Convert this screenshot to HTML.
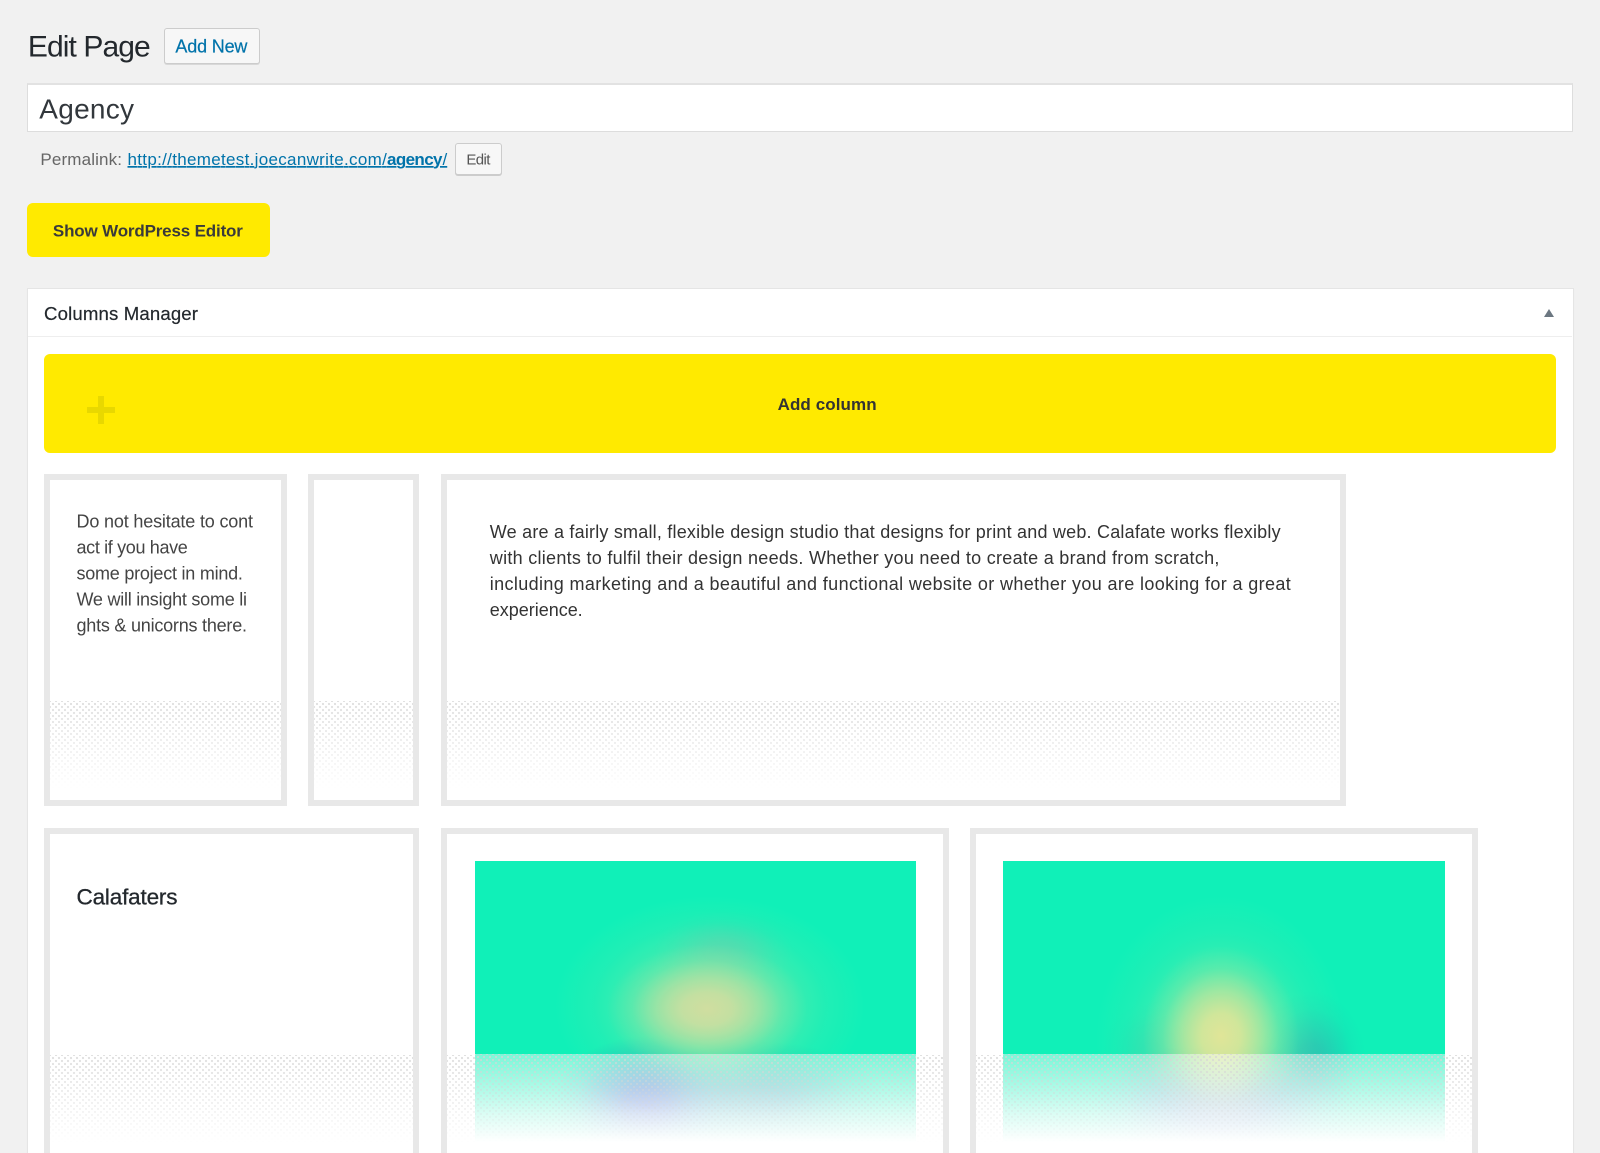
<!DOCTYPE html>
<html><head><meta charset="utf-8"><style>
html,body{margin:0;padding:0;width:1600px;height:1153px;overflow:hidden;background:#f1f1f1;font-family:"Liberation Sans",sans-serif}
#w{position:relative;width:1600px;height:1153px;overflow:hidden;background:#f1f1f1}
.a{position:absolute;box-sizing:border-box}
.btn{background:#f7f7f7;border:1px solid #ccc;border-radius:3px;box-shadow:0 1px 0 #d8d8d8}
.t{background:#fff;border:6px solid #e8e8e8}
.ov{position:absolute;left:0;right:0;top:220.7px;height:88px;}
.dots{position:absolute;inset:0;background-image:radial-gradient(circle,#d6d6d6 .9px,transparent 1.3px),radial-gradient(circle,#d6d6d6 .9px,transparent 1.3px);background-size:6px 6px;background-position:0 0,3px 3px;-webkit-mask-image:linear-gradient(#000,rgba(0,0,0,0));mask-image:linear-gradient(#000,rgba(0,0,0,0));opacity:.8}
.im{position:absolute;height:282px;top:860.7px;background-color:#10f0b8}
.fade{position:absolute;top:1053.7px;height:100px;background:linear-gradient(rgba(255,255,255,.45),rgba(255,255,255,.66) 33.5%,rgba(255,255,255,.85) 60%,#fff 88%);}
text{font-family:"Liberation Sans",sans-serif;white-space:pre}
</style></head><body><div id="w">
<div class="a btn" style="left:163.6px;top:28px;width:96px;height:36px"></div>
<div class="a" style="left:27px;top:82.7px;width:1546px;height:49px;background:#fff;border:1px solid #ddd;border-top:2px solid #e2e2e2"></div>
<div class="a btn" style="left:454.6px;top:143.3px;width:47.4px;height:31.5px;box-shadow:0 1px 0 #ccc"></div>
<div class="a" style="left:27px;top:202.7px;width:242.6px;height:54px;background:#ffea00;border-radius:6px"></div>

<div class="a" style="left:27px;top:288px;width:1546.5px;height:880px;background:#fff;border:1px solid #e5e5e5;box-shadow:0 1px 1px rgba(0,0,0,.04)"></div>
<div class="a" style="left:28px;top:336px;width:1544px;height:1px;background:#eee"></div>
<div class="a" style="left:1544px;top:309.3px;width:0;height:0;border-left:5.5px solid transparent;border-right:5.5px solid transparent;border-bottom:8px solid #6c7781"></div>

<div class="a" style="left:44px;top:353.5px;width:1512px;height:99px;background:#ffea00;border-radius:6px"></div>
<div class="a" style="left:86.7px;top:407px;width:28.6px;height:6px;background:#e8d800"></div>
<div class="a" style="left:98px;top:396px;width:6px;height:28px;background:#e8d800"></div>

<div class="a t" style="left:44px;top:474px;width:243px;height:332px"><div class="ov"><div class="dots"></div></div></div>
<div class="a t" style="left:308.3px;top:474px;width:110.7px;height:332px"><div class="ov"><div class="dots"></div></div></div>
<div class="a t" style="left:440.7px;top:474px;width:905.3px;height:332px"><div class="ov"><div class="dots"></div></div></div>

<div class="a t" style="left:44px;top:828px;width:375.3px;height:360px"><div class="ov"><div class="dots"></div></div></div>
<div class="a t" style="left:441px;top:828px;width:508px;height:360px"><div class="ov"><div class="dots"></div></div></div>
<div class="a t" style="left:970px;top:828px;width:508px;height:360px"><div class="ov"><div class="dots"></div></div></div>

<div class="im" style="left:475px;width:441px;background-image:
radial-gradient(ellipse 100px 65px at 232px 148px,rgba(208,222,160,1) 0,rgba(208,222,160,.88) 25%,rgba(208,222,160,.55) 50%,rgba(208,222,160,.18) 75%,rgba(208,222,160,0) 100%),
radial-gradient(ellipse 155px 110px at 235px 145px,rgba(130,230,165,.85) 0,rgba(130,230,165,.73) 25%,rgba(130,230,165,.42) 50%,rgba(130,230,165,.14) 75%,rgba(130,230,165,0) 100%),
radial-gradient(ellipse 70px 40px at 248px 90px,rgba(85,200,180,.6) 0,rgba(85,200,180,.52) 25%,rgba(85,200,180,.3) 50%,rgba(85,200,180,.1) 75%,rgba(85,200,180,0) 100%),
radial-gradient(ellipse 95px 70px at 172px 245px,rgba(30,60,200,.9) 0,rgba(30,60,200,.78) 25%,rgba(30,60,200,.45) 50%,rgba(30,60,200,.14) 75%,rgba(30,60,200,0) 100%),
radial-gradient(ellipse 130px 60px at 280px 240px,rgba(30,100,170,.6) 0,rgba(30,100,170,.52) 25%,rgba(30,100,170,.3) 50%,rgba(30,100,170,.1) 75%,rgba(30,100,170,0) 100%)"></div>
<div class="im" style="left:1003.3px;width:441.7px;background-image:
radial-gradient(ellipse 78px 90px at 218px 175px,rgba(224,229,152,1) 0,rgba(224,229,152,.88) 25%,rgba(224,229,152,.55) 50%,rgba(224,229,152,.18) 75%,rgba(224,229,152,0) 100%),
radial-gradient(ellipse 125px 145px at 218px 180px,rgba(130,230,165,.75) 0,rgba(130,230,165,.65) 25%,rgba(130,230,165,.37) 50%,rgba(130,230,165,.12) 75%,rgba(130,230,165,0) 100%),
radial-gradient(ellipse 55px 70px at 308px 200px,rgba(50,150,175,.5) 0,rgba(50,150,175,.43) 25%,rgba(50,150,175,.25) 50%,rgba(50,150,175,.08) 75%,rgba(50,150,175,0) 100%),
radial-gradient(ellipse 50px 50px at 150px 190px,rgba(60,170,170,.2) 0,rgba(60,170,170,.17) 25%,rgba(60,170,170,.1) 50%,rgba(60,170,170,.03) 75%,rgba(60,170,170,0) 100%),
radial-gradient(ellipse 130px 70px at 218px 250px,rgba(70,80,220,.9) 0,rgba(70,80,220,.77) 25%,rgba(70,80,220,.45) 50%,rgba(70,80,220,.14) 75%,rgba(70,80,220,0) 100%)"></div>
<div class="fade" style="left:475px;width:441px"><div class="dots" style="height:88px;bottom:auto"></div></div>
<div class="fade" style="left:1003.3px;width:441.7px"><div class="dots" style="height:88px;bottom:auto"></div></div>

<svg class="a" style="left:0;top:0" width="1600" height="1153" viewBox="0 0 1600 1153">
<text x="27.9" y="56.6" font-size="30" fill="#23282d" textLength="122.8">Edit Page</text>
<text x="175.4" y="52.6" font-size="18" fill="#0073aa" textLength="72" stroke="#0073aa" stroke-width=".2">Add New</text>
<text x="39.3" y="118.6" font-size="28" fill="#32373c" textLength="94.7">Agency</text>
<text x="40.4" y="165" font-size="17" fill="#666" textLength="81.6">Permalink:</text>
<text x="127.5" y="165" font-size="17" fill="#0073aa" textLength="259.3" text-decoration="underline">http://themetest.joecanwrite.com/</text>
<text x="387" y="165" font-size="17" font-weight="bold" fill="#0073aa" textLength="55.5" text-decoration="underline">agency</text>
<text x="442.5" y="165" font-size="17" fill="#0073aa" textLength="7" text-decoration="underline">/</text>
<text x="466.4" y="164.4" font-size="15" fill="#555" textLength="24">Edit</text>
<text x="52.9" y="236.6" font-size="17" font-weight="bold" fill="#3a3a3a" textLength="190">Show WordPress Editor</text>
<text x="44" y="320" font-size="18.6" fill="#23282d" textLength="154" stroke="#23282d" stroke-width=".2">Columns Manager</text>
<text x="777.6" y="410" font-size="17" font-weight="bold" fill="#333" textLength="99">Add column</text>
<g font-size="18" fill="#444">
<text x="76.5" y="527.5" textLength="176.5">Do not hesitate to cont</text>
<text x="76.5" y="553.5" textLength="111.3">act if you have</text>
<text x="76.5" y="579.5" textLength="166.4">some project in mind.</text>
<text x="76.5" y="605.5" textLength="170.5">We will insight some li</text>
<text x="76.5" y="631.5" textLength="170.5">ghts &amp; unicorns there.</text>
</g>
<g font-size="18" fill="#333">
<text x="489.8" y="538" textLength="790.8">We are a fairly small, flexible design studio that designs for print and web. Calafate works flexibly</text>
<text x="489.8" y="564" textLength="729.6">with clients to fulfil their design needs. Whether you need to create a brand from scratch,</text>
<text x="489.8" y="590" textLength="801">including marketing and a beautiful and functional website or whether you are looking for a great</text>
<text x="489.8" y="616" textLength="92.9">experience.</text>
</g>
<text x="76.5" y="904.5" font-size="22.5" fill="#23282d" textLength="101" stroke="#23282d" stroke-width=".3">Calafaters</text>
</svg>
</div></body></html>
